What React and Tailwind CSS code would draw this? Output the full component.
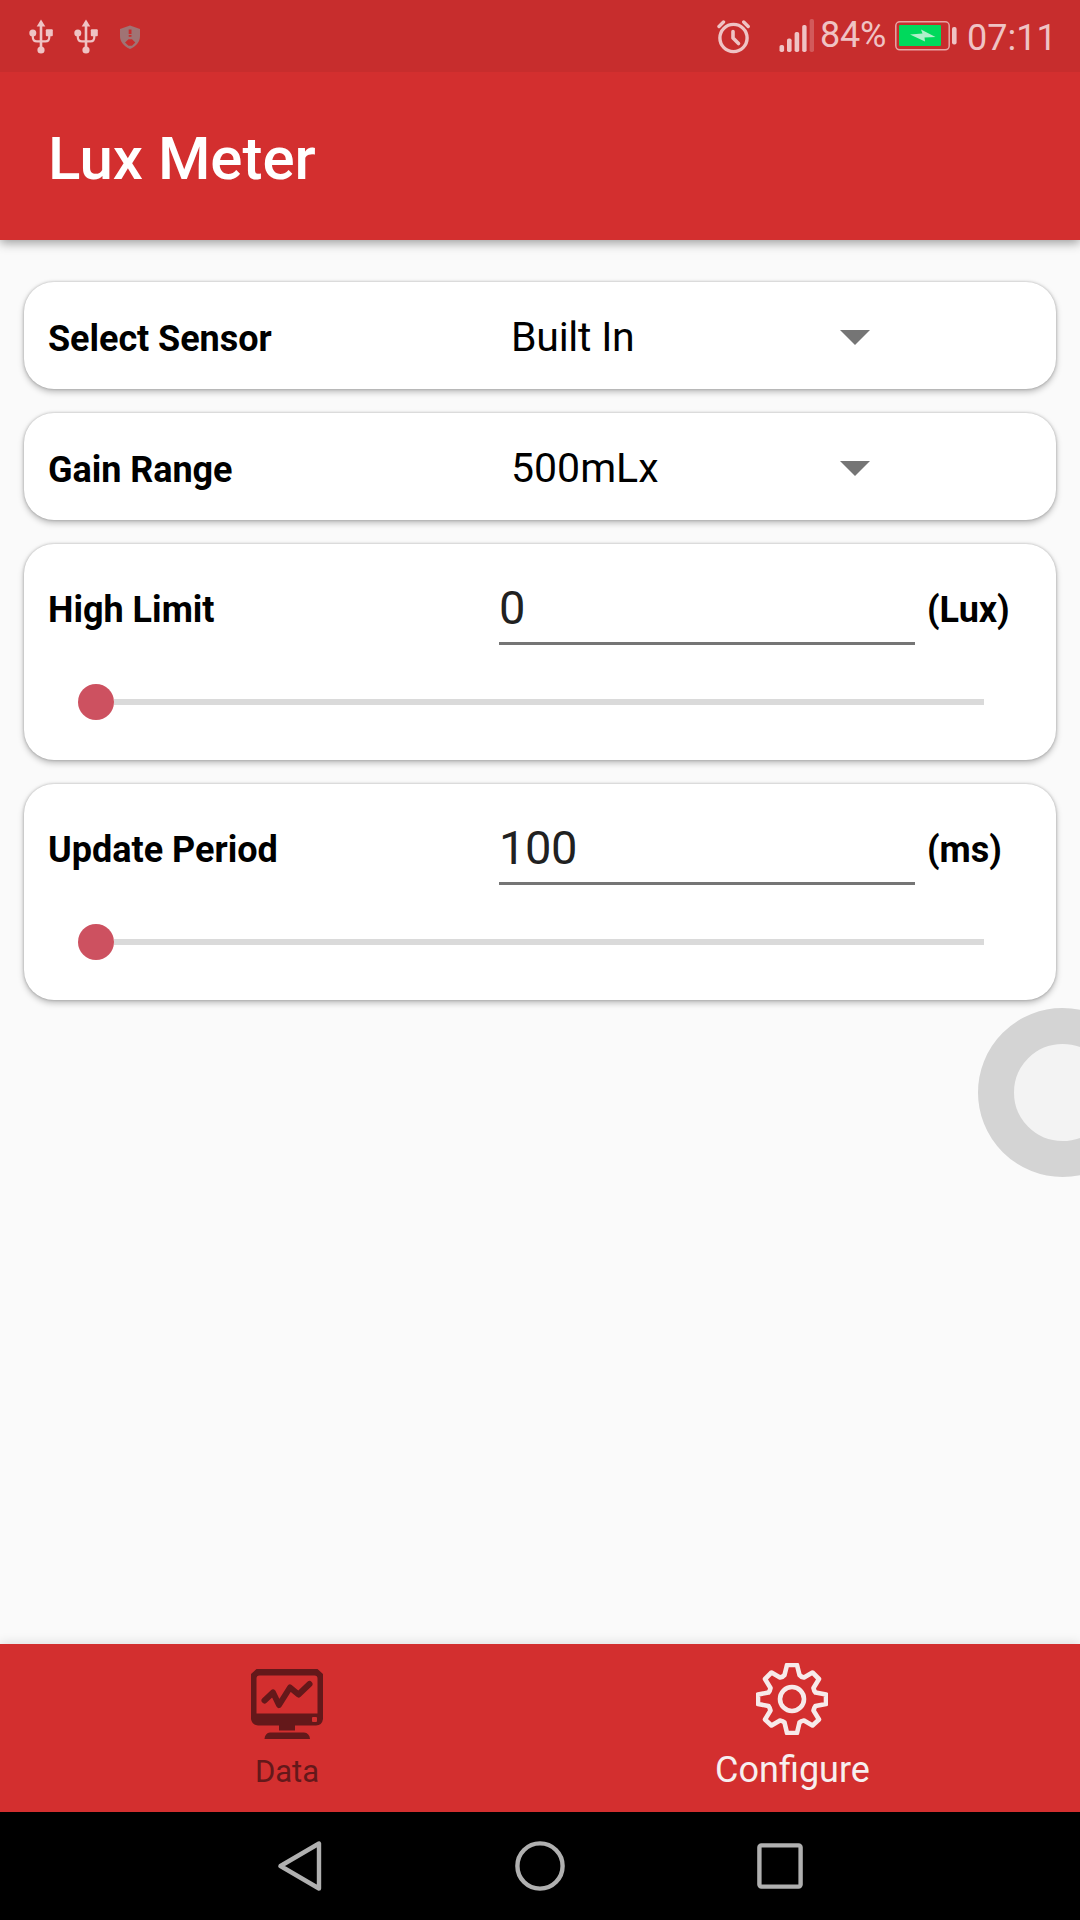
import React from "react";

function Usb() {
  return (
    <svg width="24" height="36" viewBox="0 0 24 36" fill="#efc3c4" stroke="#efc3c4" className="shrink-0">
      <path d="M12 0.5 L16.3 7.5 H7.7 Z" stroke="none" />
      <path d="M12 6 V31" strokeWidth="2.6" fill="none" />
      <path d="M3.8 13 V18 Q3.8 22.4 8 22.4 H16.5 Q20.3 22.4 20.3 18 V13" strokeWidth="2.2" fill="none" />
      <circle cx="3.8" cy="14" r="3.5" stroke="none" />
      <rect x="16.8" y="10.3" width="7" height="7" rx="1" stroke="none" />
      <circle cx="12" cy="31" r="3.6" stroke="none" />
    </svg>
  );
}

function Shield() {
  return (
    <svg width="22" height="24" viewBox="0 0 22 24" className="shrink-0">
      <path d="M11 0.5 L21 4 V11 C21 17 17 21.5 11 24 C5 21.5 1 17 1 11 V4 Z" fill="#a07374" />
      <path d="M9.7 4.5 h2.8 v4.5 h-2.8z M9.7 10 h2.8 v1.8 h-2.8z" fill="#c72d2d" />
      <path d="M6 17.5 L9.5 14.2 H13 L16.3 17.5 L13 20.7 H9.5 Z" fill="#c72d2d" />
    </svg>
  );
}

function Alarm() {
  return (
    <svg width="34" height="34" viewBox="0 0 34 34" fill="none" stroke="#efc3c4" strokeLinecap="round" className="shrink-0">
      <circle cx="16.5" cy="18" r="13.6" strokeWidth="3.4" />
      <path d="M16 11.5 V18 L21.5 23.5" strokeWidth="3.6" strokeLinejoin="round" />
      <path d="M2 6.5 L6.5 2 M31.2 6.5 L26.7 2" strokeWidth="3.4" />
    </svg>
  );
}

function Signal() {
  return (
    <svg width="36" height="34" viewBox="0 0 36 34" fill="#efc3c4" className="shrink-0">
      <rect x="0.5" y="26" width="4.6" height="7" rx="1.8" />
      <rect x="8" y="19.5" width="4.6" height="13.5" rx="1.8" />
      <rect x="15.6" y="13" width="4.6" height="20" rx="1.8" />
      <rect x="23.2" y="6" width="4.4" height="27" rx="1.8" />
      <rect x="30.6" y="0" width="4.4" height="33" rx="1.8" fill="#d25a5b" />
    </svg>
  );
}

function Battery() {
  return (
    <svg width="62" height="30" viewBox="0 0 62 30" className="shrink-0">
      <rect x="0.8" y="0.8" width="53.4" height="28" rx="4" fill="none" stroke="#e8a4a5" strokeWidth="1.5" />
      <rect x="4" y="4" width="42" height="21" rx="1" fill="#00d95c" />
      <path d="M15 13.5 L27.5 12.5 L26 8.5 L40.5 16 L29.5 16.5 L30 20.5 Z" fill="#b0f0cb" />
      <rect x="57" y="6" width="4.6" height="17.5" rx="2" fill="#efc3c4" />
    </svg>
  );
}

function StatusBar() {
  return (
    <div className="flex h-[72px] items-start bg-[#c72d2d] text-[36px] leading-[40px] text-[#efc3c4]">
      <div className="ml-[28.5px] mt-[19px] flex gap-[21px]">
        <Usb />
        <Usb />
        <div className="ml-[0.5px] mt-[6px]"><Shield /></div>
      </div>
      <div className="ml-auto flex items-start">
        <div className="mt-[19.5px]"><Alarm /></div>
        <div className="ml-[28px] mt-[19px]"><Signal /></div>
        <div className="ml-[5px] mt-[15px] w-[75px] tracking-[-0.2px]">84%</div>
        <div className="mt-[21px]"><Battery /></div>
        <div className="ml-[10px] mt-[18px] w-[113px]">07:11</div>
      </div>
    </div>
  );
}

function Card({ className = "", children }) {
  return (
    <section className={"rounded-[30px] bg-white shadow-[0_3px_6px_rgba(0,0,0,0.25),0_0_3px_rgba(0,0,0,0.25)] " + className}>
      {children}
    </section>
  );
}

function SelectCard({ label, value, valueClass = "" }) {
  return (
    <Card className="flex h-[107px] items-center pl-[24px]">
      <div className="mt-[6px] w-[463px] text-[36px] font-bold leading-[42px] tracking-[-0.05px]">{label}</div>
      <div className={"mt-[3px] w-[329px] text-[41px] leading-[48px] " + valueClass}>{value}</div>
      <svg width="30" height="15" viewBox="0 0 30 15" className="mt-[4px]" fill="#757575">
        <path d="M0 0 H30 L15 15 Z" />
      </svg>
    </Card>
  );
}

function SliderCard({ label, value, unit }) {
  return (
    <Card className="h-[216px] pl-[24px]">
      <div className="flex h-[101px] items-start">
        <div className="mt-[44.5px] w-[451px] text-[36px] font-bold leading-[42px]">{label}</div>
        <div className="mt-[32px] h-[69px] w-[416px] border-b-[3px] border-[#757575] text-[47px] leading-[63px] tracking-[-0.4px] text-[#212121]">{value}</div>
        <div className="mt-[44.5px] ml-[12px] text-[36px] font-bold leading-[42px]">{unit}</div>
      </div>
      <div className="ml-[30px] mt-[39px] flex h-[36px] w-[906px] items-center">
        <div className="size-[36px] shrink-0 rounded-full bg-[#cd5160]" />
        <div className="h-[6px] grow bg-[#dadada]" />
      </div>
    </Card>
  );
}

function MonitorIcon() {
  return (
    <svg width="72" height="70" viewBox="0 0 72 70" fill="#64181a">
      <path fillRule="evenodd" d="M5.5 0 H66.5 L72 5 V50 Q71 56.5 65 56.5 H44 V61.5 H28 V56.5 H7 Q1 56 0 50 V5 Z M8.5 6.5 Q5.5 6.5 5.5 9.5 V44.5 H66.5 V9.5 Q66.5 6.5 63.5 6.5 Z" />
      <path d="M13.5 70 Q14 64 19 63.5 H53 Q58.5 64 59 70 Z" />
      <path d="M13.5 31.5 L22 23.5 L28 36 L39 18.5 L47.5 25.5 L58.5 15" fill="none" stroke="#64181a" strokeWidth="6" strokeLinecap="round" strokeLinejoin="round" />
      <rect x="61" y="48" width="5" height="5" rx="1" fill="#d32f2f" />
    </svg>
  );
}

function GearIcon() {
  return (
    <svg width="72" height="72" viewBox="0 0 72 72" fill="none" stroke="#f7eaea" strokeWidth="4.6" strokeLinejoin="round">
      <path d="M31 2 H41 L43.5 12 Q45 14 48 14.5 L56.5 9.5 L63 16 L57.5 25 Q58 28 59.5 29.5 L70 31.5 V41 L59.5 43 Q58 45 57.5 47.5 L63 56.5 L56.5 62.5 L48 57.5 Q45 58 43.5 59.5 L41 70 H31 L28.5 59.5 Q27 58 24 57.5 L15.5 62.5 L9 56.5 L14.5 47.5 Q14 45 12.5 43 L2 41 V31.5 L12.5 29.5 Q14 28 14.5 25 L9 16 L15.5 9.5 L24 14.5 Q27 14 28.5 12 Z" />
      <circle cx="36" cy="36" r="12" />
    </svg>
  );
}

function BottomTabs() {
  return (
    <nav className="flex h-[168px] justify-center bg-[#d32f2f] shadow-[0_-2px_10px_rgba(0,0,0,0.1)]">
      <div className="flex w-[504px] flex-col items-center pt-[25px] pr-[2px] text-[#64181a]">
        <MonitorIcon />
        <div className="mt-[13px] text-[31px] leading-[40px]">Data</div>
      </div>
      <div className="flex w-[504px] flex-col items-center pt-[19px] text-[#f7eff0]">
        <GearIcon />
        <div className="mt-[15px] pl-[1px] text-[36px] leading-[40px]">Configure</div>
      </div>
    </nav>
  );
}

function SystemNav() {
  return (
    <div className="flex h-[108px] items-center justify-center gap-[190px] bg-black">
      <svg width="50" height="50" viewBox="0 0 50 50" fill="none" stroke="#b0b0b0" strokeWidth="4.4" strokeLinejoin="round">
        <path d="M44 2.5 V47.5 L5.5 25 Z" />
      </svg>
      <svg width="50" height="50" viewBox="0 0 50 50" fill="none" stroke="#b0b0b0" strokeWidth="4.4">
        <circle cx="25" cy="25" r="22.6" />
      </svg>
      <svg width="50" height="50" viewBox="0 0 50 50" fill="none" stroke="#b0b0b0" strokeWidth="4.4">
        <rect x="4.4" y="4.4" width="41.2" height="41.2" rx="2" />
      </svg>
    </div>
  );
}

export default function App() {
  return (
    <div className="relative flex h-[1920px] w-[1080px] flex-col overflow-hidden bg-[#fafafa] font-['Roboto',sans-serif] text-black">
      <header className="shadow-[0_3px_10px_rgba(0,0,0,0.38)]">
        <StatusBar />
        <div className="flex h-[168px] items-center bg-[#d32f2f] pl-[48px] pt-[5px]">
          <h1 className="text-[60px] font-medium leading-[70px] text-white">Lux Meter</h1>
        </div>
      </header>
      <main className="flex grow flex-col gap-[24px] px-[24px] pt-[42px]">
        <SelectCard label="Select Sensor" value="Built In" valueClass="tracking-[-0.25px]" />
        <SelectCard label="Gain Range" value="500mLx" />
        <SliderCard label="High Limit" value="0" unit="(Lux)" />
        <SliderCard label="Update Period" value="100" unit="(ms)" />
      </main>
      <BottomTabs />
      <SystemNav />
      <div className="absolute left-[977.5px] top-[1007.5px] size-[169px] rounded-full border-[36px] border-[#d4d4d4] bg-[#f3f3f3]" />
    </div>
  );
}
